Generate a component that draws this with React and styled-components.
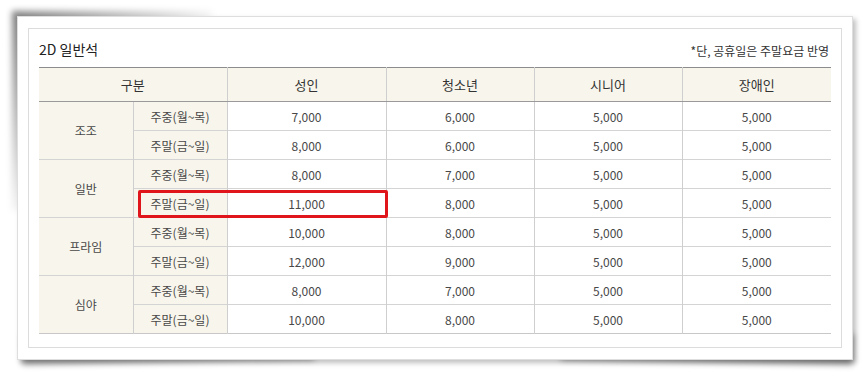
import React from 'react'
import styled, { createGlobalStyle } from 'styled-components'

const GlobalStyle = createGlobalStyle`
    html, body {
        margin: 0;
        padding: 0;
        background: #fff;
    }
    body {
        font-family: 'Noto Sans CJK KR', 'Noto Sans', sans-serif;
        color: #444;
    }
`

const Page = styled.div`
    position: relative;
    z-index: 0;
    padding: 16px 0 0 17px;
    width: 868px;
    height: 373px;
    box-sizing: border-box;
    overflow: hidden;
`

// 종이처럼 살짝 말린 그림자
const Paper = styled.div`
    position: relative;
    width: 836px;
    box-sizing: border-box;
    padding: 11px 10px;
    background: #fff;
    border: 1px solid #dedede;
    box-shadow: 3px 3px 5px rgba(0, 0, 0, 0.25);
    &::before,
    &::after {
        content: '';
        position: absolute;
        z-index: -1;
        height: 30px;
        width: 35%;
        bottom: 3px;
        box-shadow: 0 6px 6px rgba(0, 0, 0, 0.4);
    }
    &::before {
        left: 4px;
        transform: rotate(-1deg);
    }
    &::after {
        right: 3px;
        transform: rotate(1deg);
        box-shadow: 4px 6px 6px rgba(0, 0, 0, 0.45);
    }
`

const TopShade = styled.div`
    position: absolute;
    z-index: -1;
    left: -6px;
    top: -6px;
    width: 200px;
    height: 200px;
    background: linear-gradient(135deg, rgba(0, 0, 0, 0.5), rgba(0, 0, 0, 0) 55%);
    filter: blur(3px);
`

const Box = styled.div`
    border: 1px solid #dcdcdc;
    padding: 10px 10px 13px;
    background: #fff;
`

const TitleRow = styled.div`
    display: flex;
    align-items: flex-end;
    justify-content: space-between;
    margin-bottom: 8px;
`

const Title = styled.h3`
    margin: 0;
    font-size: 14px;
    line-height: 20px;
    font-weight: 400;
    color: #222;
`

const Note = styled.span`
    font-size: 12px;
    line-height: 16px;
    color: #333;
    margin-right: 2px;
`

const TableWrap = styled.div`
    position: relative;
`

const Table = styled.table`
    width: 100%;
    border-collapse: collapse;
    table-layout: fixed;
    font-size: 12px;
    text-align: center;
    border-top: 1px solid #8c8c8c;
    border-bottom: 1px solid #c8c8c8;
`

const Th = styled.th`
    height: 33px;
    padding: 0;
    font-weight: 400;
    font-size: 13px;
    color: #333;
    background: #f8f6ec;
    border-bottom: 1px solid #9a9a9a;
    border-left: ${p => (p.$first ? 'none' : '1px solid #cfcfcf')};
`

const Td = styled.td`
    height: 28px;
    padding: 0;
    color: #484848;
    background: ${p => (p.$cream ? '#f8f6ec' : '#fff')};
    border-top: 1px solid #d4d4d4;
    border-left: ${p => (p.$first ? 'none' : '1px solid #cfcfcf')};
`

const Highlight = styled.div`
    position: absolute;
    left: 99px;
    top: 123px;
    width: 250px;
    height: 28px;
    box-sizing: border-box;
    border: 3px solid #e0141b;
    border-radius: 2px;
    pointer-events: none;
`

const columns = ['성인', '청소년', '시니어', '장애인']

const groups = [
    {
        name: '조조',
        rows: [
            ['주중(월~목)', '7,000', '6,000', '5,000', '5,000'],
            ['주말(금~일)', '8,000', '6,000', '5,000', '5,000']
        ]
    },
    {
        name: '일반',
        rows: [
            ['주중(월~목)', '8,000', '7,000', '5,000', '5,000'],
            ['주말(금~일)', '11,000', '8,000', '5,000', '5,000']
        ]
    },
    {
        name: '프라임',
        rows: [
            ['주중(월~목)', '10,000', '8,000', '5,000', '5,000'],
            ['주말(금~일)', '12,000', '9,000', '5,000', '5,000']
        ]
    },
    {
        name: '심야',
        rows: [
            ['주중(월~목)', '8,000', '7,000', '5,000', '5,000'],
            ['주말(금~일)', '10,000', '8,000', '5,000', '5,000']
        ]
    }
]

export default function App() {
    return (
        <Page>
            <GlobalStyle />
            <Paper>
                <TopShade />
                <Box>
                    <TitleRow>
                        <Title>2D 일반석</Title>
                        <Note>*단, 공휴일은 주말요금 반영</Note>
                    </TitleRow>
                    <TableWrap>
                        <Table>
                            <colgroup>
                                <col style={{ width: 94 }} />
                                <col style={{ width: 94 }} />
                                <col style={{ width: 159 }} />
                                <col style={{ width: 148 }} />
                                <col style={{ width: 148 }} />
                                <col />
                            </colgroup>
                            <thead>
                                <tr>
                                    <Th colSpan={2} $first>
                                        구분
                                    </Th>
                                    {columns.map(c => (
                                        <Th key={c}>{c}</Th>
                                    ))}
                                </tr>
                            </thead>
                            <tbody>
                                {groups.map(g =>
                                    g.rows.map((row, i) => (
                                        <tr key={g.name + i}>
                                            {i === 0 && (
                                                <Td rowSpan={2} $cream $first>
                                                    {g.name}
                                                </Td>
                                            )}
                                            <Td $cream>{row[0]}</Td>
                                            {row.slice(1).map((v, j) => (
                                                <Td key={j}>{v}</Td>
                                            ))}
                                        </tr>
                                    ))
                                )}
                            </tbody>
                        </Table>
                        <Highlight />
                    </TableWrap>
                </Box>
            </Paper>
        </Page>
    )
}
